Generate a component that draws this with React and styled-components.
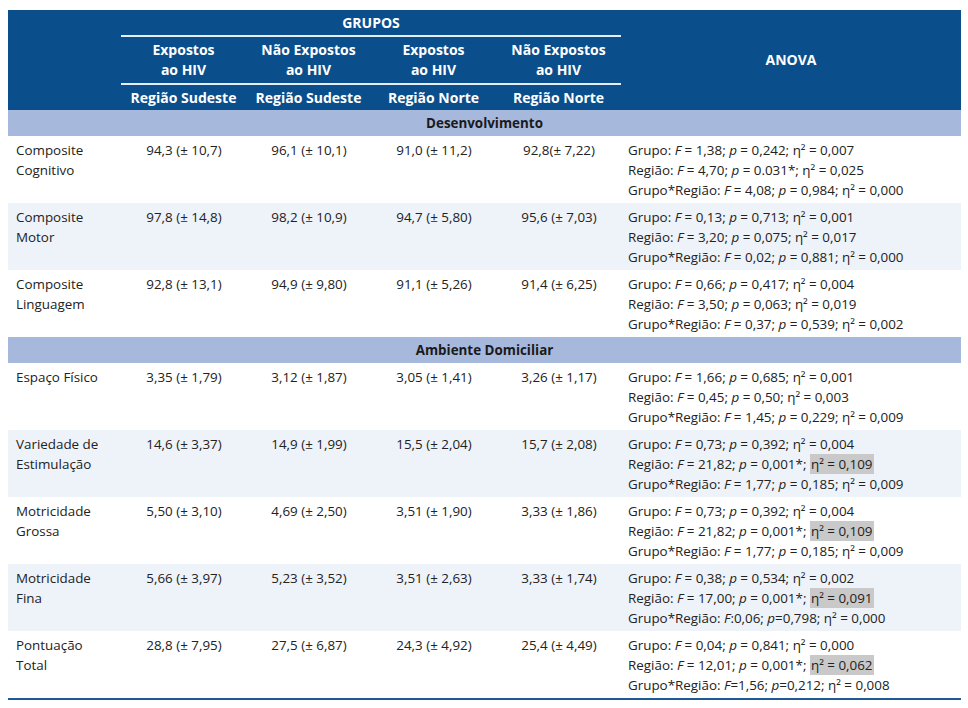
import React from "react";
import styled, { createGlobalStyle } from "styled-components";

const GlobalStyle = createGlobalStyle`
  body {
    margin: 0;
    background: #ffffff;
    font-family: "Open Sans", "Noto Sans", sans-serif;
    color: #222;
  }
`;

const Page = styled.div`
  padding: 10px 7px 0 8px;
`;

const Table = styled.table`
  width: 953px;
  border-collapse: separate;
  border-spacing: 0;
  font-size: 13.4px;
  border-bottom: 2px solid #1f5a96;
`;

const Head = styled.thead`
  background: #0b4e8c;
  color: #ffffff;
`;

const HeadCell = styled.th`
  font-weight: 700;
  font-size: 14px;
  text-align: center;
  padding: 0;
  height: ${(p) => p.$h || 25}px;
  line-height: 20px;
  vertical-align: middle;
  border-bottom: ${(p) => (p.$rule ? "2px solid #e6eef8" : "none")};
  width: ${(p) => (p.$w ? `${p.$w}px` : "auto")};
`;

const Band = styled.td`
  background: #a7b8dd;
  font-weight: 700;
  text-align: center;
  height: 26px;
  padding: 0;
  color: #1a1a1a;
`;

const Row = styled.tr`
  background: ${(p) => (p.$alt ? "#eef2f9" : "#ffffff")};
`;

const Cell = styled.td`
  height: 66.7px;
  box-sizing: border-box;
  padding: 4px 6px 3px ${(p) => (p.$first ? 8 : 7)}px;
  vertical-align: top;
  line-height: 20px;
  text-align: ${(p) => (p.$center ? "center" : "left")};
  white-space: ${(p) => (p.$nowrap ? "nowrap" : "normal")};
`;

const Line = styled.div`
  white-space: nowrap;
`;

const Mark = styled.span`
  background: #c9c9c9;
  padding: 1px 1px;
`;

const groups = [
  ["Expostos", "Região Sudeste"],
  ["Não Expostos", "Região Sudeste"],
  ["Expostos", "Região Norte"],
  ["Não Expostos", "Região Norte"],
];

// anova line: [label, F, p, eta, highlight, compact]
const sections = [
  {
    title: "Desenvolvimento",
    rows: [
      {
        name: ["Composite", "Cognitivo"],
        values: ["94,3 (± 10,7)", "96,1 (± 10,1)", "91,0 (± 11,2)", "92,8(± 7,22)"],
        anova: [
          ["Grupo", "1,38", "0,242", "0,007"],
          ["Região", "4,70", "0.031*", "0,025"],
          ["Grupo*Região", "4,08", "0,984", "0,000"],
        ],
      },
      {
        name: ["Composite", "Motor"],
        values: ["97,8 (± 14,8)", "98,2 (± 10,9)", "94,7 (± 5,80)", "95,6 (± 7,03)"],
        anova: [
          ["Grupo", "0,13", "0,713", "0,001"],
          ["Região", "3,20", "0,075", "0,017"],
          ["Grupo*Região", "0,02", "0,881", "0,000"],
        ],
      },
      {
        name: ["Composite", "Linguagem"],
        values: ["92,8 (± 13,1)", "94,9 (± 9,80)", "91,1 (± 5,26)", "91,4 (± 6,25)"],
        anova: [
          ["Grupo", "0,66", "0,417", "0,004"],
          ["Região", "3,50", "0,063", "0,019"],
          ["Grupo*Região", "0,37", "0,539", "0,002"],
        ],
      },
    ],
  },
  {
    title: "Ambiente Domiciliar",
    rows: [
      {
        name: ["Espaço Físico"],
        values: ["3,35 (± 1,79)", "3,12 (± 1,87)", "3,05 (± 1,41)", "3,26 (± 1,17)"],
        anova: [
          ["Grupo", "1,66", "0,685", "0,001"],
          ["Região", "0,45", "0,50", "0,003"],
          ["Grupo*Região", "1,45", "0,229", "0,009"],
        ],
      },
      {
        name: ["Variedade de", "Estimulação"],
        values: ["14,6 (± 3,37)", "14,9 (± 1,99)", "15,5 (± 2,04)", "15,7 (± 2,08)"],
        anova: [
          ["Grupo", "0,73", "0,392", "0,004"],
          ["Região", "21,82", "0,001*", "0,109", true],
          ["Grupo*Região", "1,77", "0,185", "0,009"],
        ],
      },
      {
        name: ["Motricidade", "Grossa"],
        values: ["5,50 (± 3,10)", "4,69 (± 2,50)", "3,51 (± 1,90)", "3,33 (± 1,86)"],
        anova: [
          ["Grupo", "0,73", "0,392", "0,004"],
          ["Região", "21,82", "0,001*", "0,109", true],
          ["Grupo*Região", "1,77", "0,185", "0,009"],
        ],
      },
      {
        name: ["Motricidade", "Fina"],
        values: ["5,66 (± 3,97)", "5,23 (± 3,52)", "3,51 (± 2,63)", "3,33 (± 1,74)"],
        anova: [
          ["Grupo", "0,38", "0,534", "0,002"],
          ["Região", "17,00", "0,001*", "0,091", true],
          ["Grupo*Região", "0,06", "0,798", "0,000", false, ":"],
        ],
      },
      {
        name: ["Pontuação", "Total"],
        values: ["28,8 (± 7,95)", "27,5 (± 6,87)", "24,3 (± 4,92)", "25,4 (± 4,49)"],
        anova: [
          ["Grupo", "0,04", "0,841", "0,000"],
          ["Região", "12,01", "0,001*", "0,062", true],
          ["Grupo*Região", "1,56", "0,212", "0,008", false, "="],
        ],
      },
    ],
  },
];

function AnovaLine({ label, f, p, eta, mark, compact }) {
  const etaText = `η² = ${eta}`;
  return (
    <Line>
      {label}: <i>F</i>
      {compact ? `${compact}${f}` : ` = ${f}`}; <i>p</i>
      {compact ? `=${p}` : ` = ${p}`};{" "}
      {mark ? <Mark>{etaText}</Mark> : etaText}
    </Line>
  );
}

export default function App() {
  let stripe = 0;
  return (
    <Page>
      <GlobalStyle />
      <Table>
        <Head>
          <tr>
            <HeadCell rowSpan={3} $w={113} />
            <HeadCell colSpan={4} $rule $h={25}>
              GRUPOS
            </HeadCell>
            <HeadCell rowSpan={3}>ANOVA</HeadCell>
          </tr>
          <tr>
            {groups.map((g, i) => (
              <HeadCell key={i} $rule $h={46} $w={125}>
                {g[0]}
                <br />
                ao HIV
              </HeadCell>
            ))}
          </tr>
          <tr>
            {groups.map((g, i) => (
              <HeadCell key={i} $h={25}>
                {g[1]}
              </HeadCell>
            ))}
          </tr>
        </Head>
        <tbody>
          {sections.map((s) => {
            stripe = 0;
            return (
              <React.Fragment key={s.title}>
                <tr>
                  <Band colSpan={6}>{s.title}</Band>
                </tr>
                {s.rows.map((r) => {
                  const alt = stripe++ % 2 === 1;
                  return (
                    <Row key={r.name.join(" ")} $alt={alt}>
                      <Cell $first>
                        {r.name.map((n) => (
                          <Line key={n}>{n}</Line>
                        ))}
                      </Cell>
                      {r.values.map((v, i) => (
                        <Cell key={i} $center $nowrap>
                          {v}
                        </Cell>
                      ))}
                      <Cell>
                        {r.anova.map((a) => (
                          <AnovaLine
                            key={a[0]}
                            label={a[0]}
                            f={a[1]}
                            p={a[2]}
                            eta={a[3]}
                            mark={a[4]}
                            compact={a[5]}
                          />
                        ))}
                      </Cell>
                    </Row>
                  );
                })}
              </React.Fragment>
            );
          })}
        </tbody>
      </Table>
    </Page>
  );
}
